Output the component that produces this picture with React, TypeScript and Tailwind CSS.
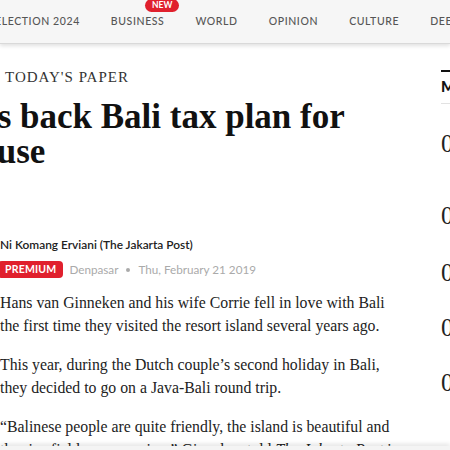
import React from "react";

const navItems = ["ELECTION 2024", "BUSINESS", "WORLD", "OPINION", "CULTURE", "DEEP LOOK"];

const mostViewed = [
  { n: "01", h: "h-[72px]" },
  { n: "02", h: "h-[57px]" },
  { n: "03", h: "h-[55px]" },
  { n: "04", h: "h-[55px]" },
  { n: "05", h: "h-[55px]" },
];

const serif = "font-['Liberation_Serif',serif]";
const sans = "font-['Lato',sans-serif]";

function NavBar() {
  return (
    <div className="relative z-10 h-[44px] bg-[#f6f6f6] border-b border-[#d9d9d9] shadow-[0_2px_4px_rgba(0,0,0,0.12)]">
      <ul className={`flex h-full items-center gap-[31px] -ml-[5px] whitespace-nowrap ${sans}`}>
        {navItems.map((item) => (
          <li
            key={item}
            className="relative text-[10.5px] font-medium leading-[15px] tracking-[0.6px] text-[#555]"
          >
            {item}
            {item === "BUSINESS" && (
              <span className="absolute -top-[15px] -right-[15px] rounded-full bg-[#e0202d] px-[7px] text-[8.5px] font-bold leading-[13px] tracking-normal text-white">
                NEW
              </span>
            )}
          </li>
        ))}
      </ul>
    </div>
  );
}

function Article() {
  return (
    <article className="w-[410px] shrink-0 pt-[23px]">
      <div className={`pl-[5px] text-[15px] leading-[20px] tracking-[1px] text-[#333] ${serif}`}>
        TODAY'S PAPER
      </div>
      <h1
        className={`mt-[12px] -ml-[110px] text-[35px] font-bold leading-[35px] text-[#111] whitespace-nowrap ${serif}`}
      >
        <span className="block">Tourists back Bali tax plan for</span>
        <span className="block -ml-[7px]">good cause</span>
      </h1>

      <div className={`mt-[67px] text-[11.9px] font-semibold leading-[18px] text-[#222] ${sans}`}>
        Ni Komang Erviani (The Jakarta Post)
      </div>
      <div className={`mt-[7px] flex items-center text-[11.7px] leading-[17px] ${sans}`}>
        <span className="-ml-[2px] rounded-[4px] bg-[#e0202d] px-[7px] text-[10.5px] font-bold leading-[17px] tracking-[0.2px] text-white">
          PREMIUM
        </span>
        <span className="ml-[6px] text-[#aaa]">Denpasar</span>
        <span className="mx-[8px] h-[4px] w-[4px] rounded-full bg-[#aaa]" />
        <span className="text-[#aaa]">Thu, February 21 2019</span>
      </div>

      <div
        className={`mt-[13px] w-[404px] space-y-[16px] text-[15.8px] leading-[23px] text-[#222] ${serif}`}
      >
        <p>
          Hans van Ginneken and his wife Corrie fell in love with Bali the first time they
          visited the resort island several years ago.
        </p>
        <p>
          This year, during the Dutch couple’s second holiday in Bali, they decided to go on a
          Java-Bali round trip.
        </p>
        <p>
          “Balinese people are quite friendly, the island is beautiful and the rice fields are
          amazing,” Ginneken told <i>The Jakarta Post</i> in Denpasar.
        </p>
      </div>
    </article>
  );
}

function MostViewed() {
  return (
    <aside className="ml-[31px] w-[300px] shrink-0 pt-[26px]">
      <div className="border-t-2 border-[#111]">
        <h2
          className={`pt-[4px] pb-[7px] border-b border-[#e2e2e2] text-[15px] font-black leading-[20px] text-[#111] ${sans}`}
        >
          MOST VIEWED
        </h2>
      </div>
      <ol className="pt-[25px]">
        {mostViewed.map((item) => (
          <li key={item.n} className={`flex ${item.h}`}>
            <span className={`text-[25px] leading-[30px] text-[#222] ${serif}`}>{item.n}</span>
          </li>
        ))}
      </ol>
    </aside>
  );
}

export default function App() {
  return (
    <div className="relative h-[450px] w-[450px] overflow-hidden bg-white">
      <NavBar />
      <div className="flex">
        <Article />
        <MostViewed />
      </div>
      <div className="absolute bottom-0 left-0 right-0 h-[4px] bg-[#f4f4f4] shadow-[0_-2px_4px_rgba(0,0,0,0.12)]" />
    </div>
  );
}
